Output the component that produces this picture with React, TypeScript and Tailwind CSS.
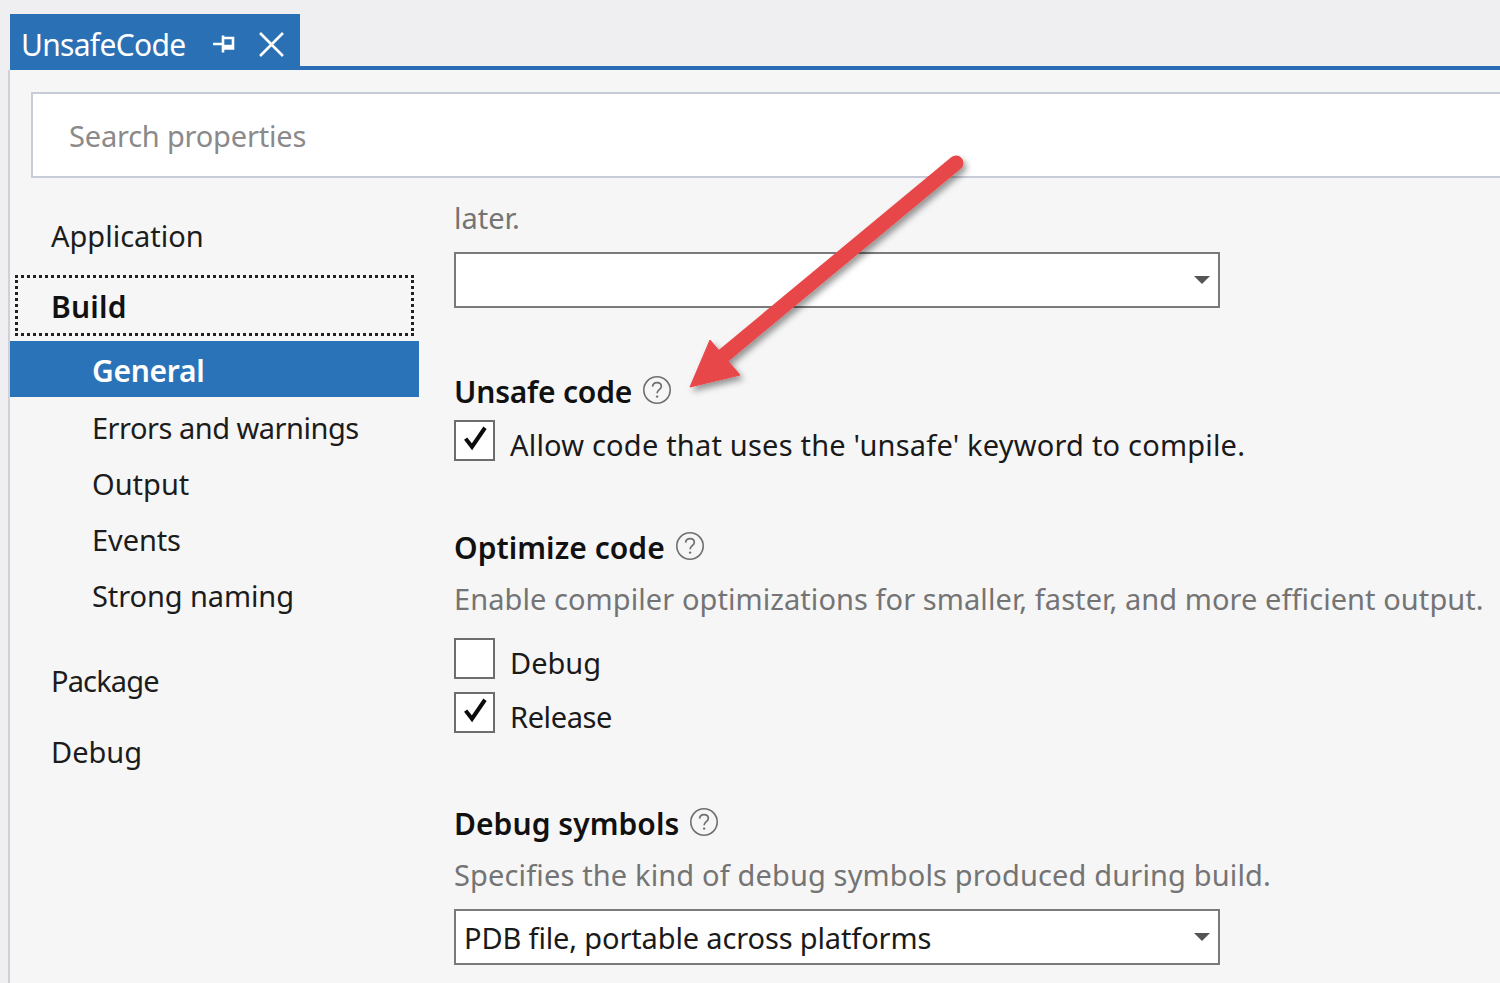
const font = "font-['Noto_Sans','Open_Sans',sans-serif]";

function Help({ className = "" }: { className?: string }) {
  return (
    <svg viewBox="0 0 30 30" className={"h-[30px] w-[30px] shrink-0 " + className} fill="none">
      <circle cx="15" cy="15" r="13.2" stroke="#6f6f6f" strokeWidth="1.6" />
      <path d="M10.6 11.6c.3-2.6 2-3.9 4.4-3.9 2.5 0 4.3 1.5 4.3 3.7 0 3.2-4.2 3.4-4.2 6.9" stroke="#6f6f6f" strokeWidth="1.7" />
      <circle cx="15.1" cy="21.6" r="1.2" fill="#6f6f6f" />
    </svg>
  );
}

function Check({ on, label, tracking = "tracking-[0px]" }: { on?: boolean; label: string; tracking?: string }) {
  return (
    <div className="flex h-[41px] items-center">
      <div className="flex h-[41px] w-[41px] shrink-0 items-center justify-center border-2 border-[#6d6d6d] bg-white">
        {on && (
          <svg viewBox="0 0 24 24" className="mb-[5px] h-[30px] w-[30px]" fill="none">
            <path d="M4.5 12.5 9.6 19 20 3.8" stroke="#0c0c0c" strokeWidth="3.2" />
          </svg>
        )}
      </div>
      <span className={"ml-[15px] pt-[9px] text-[29px] whitespace-nowrap text-[#1a1a1a] " + tracking}>{label}</span>
    </div>
  );
}

function Select({ value }: { value?: string }) {
  return (
    <div className="flex h-[56px] w-[766px] items-center justify-between border-2 border-[#7a7a7a] bg-white pr-[8px] pl-[8px]">
      <span className="pt-[2px] text-[29px] tracking-[-0.14px] whitespace-nowrap text-[#1a1a1a]">{value}</span>
      <svg viewBox="0 0 16 8" className="h-[8px] w-[16px]">
        <path d="M0 0h16L8 8z" fill="#555" />
      </svg>
    </div>
  );
}

function Heading({ text, tracking = "tracking-[-0.1px]" }: { text: string; tracking?: string }) {
  return (
    <div className="flex h-[40px] items-center gap-[10px]">
      <span className={"text-[30px] leading-none font-semibold whitespace-nowrap text-[#111] " + tracking}>{text}</span>
      <Help className="-mt-[4px]" />
    </div>
  );
}

function NavItem({ label, indent, h, tracking = "tracking-[0px]" }: { label: string; indent?: boolean; h: string; tracking?: string }) {
  return (
    <div className={"flex items-center text-[29px] whitespace-nowrap text-[#1c1c1c] " + tracking + " " + h + (indent ? " pl-[82px]" : " pl-[41px]")}>
      {label}
    </div>
  );
}

export default function App() {
  return (
    <div className={"relative h-[983px] w-[1500px] overflow-hidden bg-[#efeff2] " + font}>
      {/* tab strip */}
      <div className="flex h-[70px] items-end pl-[10px]">
        <div className="flex h-[56px] w-[290px] items-center bg-[#2a70b5] pt-[4px] pl-[11px] text-white">
          <span className="text-[30px] tracking-[-0.7px]">UnsafeCode</span>
          <svg viewBox="0 0 24 24" className="ml-[27px] h-[24px] w-[24px]" fill="none" stroke="#fff" strokeWidth="2.6">
            <path d="M1 12h10M11 3.500v17M11 6h10v10.500H11M11 14h10" />
          </svg>
          <svg viewBox="0 0 24 24" className="ml-[23px] h-[25px] w-[25px]" fill="none" stroke="#fff" strokeWidth="2.500">
            <path d="M1 1l22 22M23 1 1 23" />
          </svg>
        </div>
      </div>
      <div className="-mt-[4px] ml-[10px] h-[4px] bg-[#2a6db5]" />

      {/* body */}
      <div className="ml-[8px] h-[913px] border-l-2 border-[#d0d0d8] bg-[#f6f6f7] pt-[22px]">
        <div className="ml-[21px] flex h-[86px] w-[1600px] items-center border-2 border-[#c8cbd8] bg-white pt-[2px] pl-[36px] text-[29px] tracking-[-0.2px] text-[#8a8a8a]">
          Search properties
        </div>

        <div className="flex">
          {/* sidebar */}
          <div className="w-[409px] shrink-0 pt-[26px]">
            <NavItem label="Application" h="h-[64px]" />
            <div className="mt-[7px] ml-[5px] flex h-[61px] w-[399px] items-center border-[3px] border-dotted border-[#222] pt-[2px] pl-[33px] text-[30px] font-semibold tracking-[0.2px] text-[#111]">
              Build
            </div>
            <div className="mt-[5px] flex h-[56px] items-center bg-[#2a73b9] pt-[2px] pl-[82px] text-[30px] font-semibold tracking-[-0.3px] text-white">
              General
            </div>
            <div className="pt-[3px]">
              <NavItem label="Errors and warnings" indent h="h-[56px]" tracking="tracking-[-0.5px]" />
              <NavItem label="Output" indent h="h-[56px]" />
              <NavItem label="Events" indent h="h-[56px]" tracking="tracking-[-0.1px]" />
              <NavItem label="Strong naming" indent h="h-[56px]" tracking="tracking-[-0.1px]" />
            </div>
            <NavItem label="Package" h="h-[56px] mt-[29px]" tracking="tracking-[-0.85px]" />
            <NavItem label="Debug" h="h-[56px] mt-[15px]" />
          </div>

          {/* main */}
          <div className="ml-[35px] min-w-0 flex-1 pt-[20px]">
            <div className="flex h-[40px] items-center text-[29px] text-[#747474]">later.</div>
            <div className="mt-[14px]">
              <Select />
            </div>

            <div className="mt-[64px]">
              <Heading text="Unsafe code" tracking="tracking-[-0.2px]" />
            </div>
            <div className="mt-[8px]">
              <Check on label="Allow code that uses the 'unsafe' keyword to compile." tracking="tracking-[0.2px]" />
            </div>

            <div className="mt-[67px]">
              <Heading text="Optimize code" tracking="tracking-[0.05px]" />
            </div>
            <div className="mt-[11px] flex h-[40px] items-center text-[29px] tracking-[0.07px] whitespace-nowrap text-[#747474]">
              Enable compiler optimizations for smaller, faster, and more efficient output.
            </div>
            <div className="mt-[19px] flex flex-col gap-[13px]">
              <Check label="Debug" />
              <Check on label="Release" tracking="tracking-[-0.4px]" />
            </div>

            <div className="mt-[71px]">
              <Heading text="Debug symbols" tracking="tracking-[0.05px]" />
            </div>
            <div className="mt-[11px] flex h-[40px] items-center text-[29px] tracking-[0.14px] whitespace-nowrap text-[#747474]">
              Specifies the kind of debug symbols produced during build.
            </div>
            <div className="mt-[14px]">
              <Select value="PDB file, portable across platforms" />
            </div>
          </div>
        </div>
      </div>

      {/* red callout arrow drawn over the page */}
      <svg viewBox="0 0 1500 983" className="pointer-events-none absolute top-0 left-0 h-[983px] w-[1500px]">
        <defs>
          <filter id="arrowShadow" x="-20%" y="-20%" width="140%" height="140%">
            <feDropShadow dx="3" dy="4" stdDeviation="3" floodColor="#000" floodOpacity="0.4" />
          </filter>
        </defs>
        <g filter="url(#arrowShadow)" fill="#e8474a" stroke="#e8474a">
          <path d="M956 163 722 357" strokeWidth="15" strokeLinecap="round" fill="none" />
          <path d="M690 387 710 340 740 375z" strokeWidth="1" />
        </g>
      </svg>
    </div>
  );
}
